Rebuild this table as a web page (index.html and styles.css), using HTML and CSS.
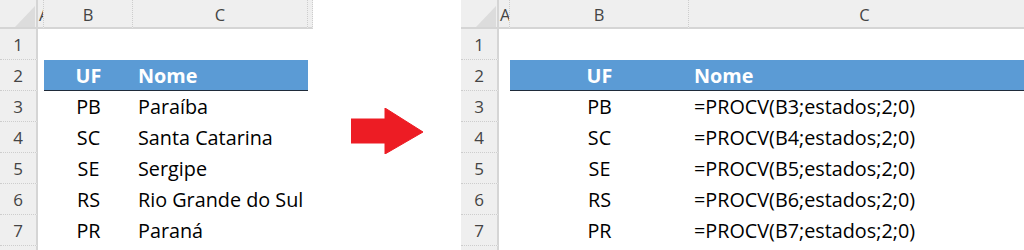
FILE: index.html
```html
<!DOCTYPE html>
<html lang="pt">
<head>
<meta charset="utf-8">
<title>PROCV</title>
<link rel="stylesheet" href="styles.css">
</head>
<body>
<div class="page">
  <div class="sheet left">
    <div class="corner"><svg class="tri" viewBox="0 0 20 21" width="20" height="21"><polygon points="0,21 20,0 20,21" fill="#dcdcdc"/></svg></div>
    <div class="ch cha">A</div>
    <div class="ch">B</div>
    <div class="ch">C</div>
    <div class="ch"></div>

    <div class="rh">1</div><div class="c"></div><div class="c"></div><div class="c"></div><div class="c"></div>
    <div class="rh">2</div><div class="c"></div><div class="c ctr blue">UF</div><div class="c pad blue">Nome</div><div class="c"></div>
    <div class="rh">3</div><div class="c"></div><div class="c ctr">PB</div><div class="c pad">Paraíba</div><div class="c"></div>
    <div class="rh">4</div><div class="c"></div><div class="c ctr">SC</div><div class="c pad">Santa Catarina</div><div class="c"></div>
    <div class="rh">5</div><div class="c"></div><div class="c ctr">SE</div><div class="c pad">Sergipe</div><div class="c"></div>
    <div class="rh">6</div><div class="c"></div><div class="c ctr">RS</div><div class="c pad">Rio Grande do Sul</div><div class="c"></div>
    <div class="rh">7</div><div class="c"></div><div class="c ctr">PR</div><div class="c pad">Paraná</div><div class="c"></div>
    <div class="rh"></div>
  </div>

  <div class="gap">
    <svg class="arrow" viewBox="0 0 72 46" width="72" height="46"><polygon points="0,11 34,11 34,0 72,24 34,46 34,35 0,35" fill="#ed1c24" stroke="#ed1c24" stroke-width="1" stroke-linejoin="round"/></svg>
  </div>

  <div class="sheet right">
    <div class="corner"><svg class="tri" viewBox="0 0 20 21" width="20" height="21"><polygon points="0,21 20,0 20,21" fill="#dcdcdc"/></svg></div>
    <div class="ch cha">A</div>
    <div class="ch">B</div>
    <div class="ch">C</div>

    <div class="rh">1</div><div class="c"></div><div class="c"></div><div class="c"></div>
    <div class="rh">2</div><div class="c"></div><div class="c ctr blue">UF</div><div class="c pad blue">Nome</div>
    <div class="rh">3</div><div class="c"></div><div class="c ctr">PB</div><div class="c pad">=PROCV(B3;estados;2;0)</div>
    <div class="rh">4</div><div class="c"></div><div class="c ctr">SC</div><div class="c pad">=PROCV(B4;estados;2;0)</div>
    <div class="rh">5</div><div class="c"></div><div class="c ctr">SE</div><div class="c pad">=PROCV(B5;estados;2;0)</div>
    <div class="rh">6</div><div class="c"></div><div class="c ctr">RS</div><div class="c pad">=PROCV(B6;estados;2;0)</div>
    <div class="rh">7</div><div class="c"></div><div class="c ctr">PR</div><div class="c pad">=PROCV(B7;estados;2;0)</div>
    <div class="rh"></div>
  </div>
</div>
</body>
</html>
```
FILE: styles.css
```css
* { box-sizing: border-box; }
body {
  margin: 0;
  background: #fff;
  font-family: "Open Sans", "Liberation Sans", sans-serif;
}
.page {
  display: flex;
  width: 1024px;
  height: 250px;
  overflow: hidden;
}
.sheet {
  display: grid;
  grid-template-rows: 29px repeat(8, 31px);
  height: 250px;
  overflow: hidden;
  flex: none;
}
.left {
  width: 313px;
  grid-template-columns: 38px 6px 89px 175px 5px;
}
.right {
  width: 563px;
  grid-template-columns: 38px 11px 179px 352px;
}
.gap {
  width: 148px;
  flex: none;
  display: flex;
  justify-content: center;
  align-items: flex-start;
  padding-top: 108px;
}
.arrow { display: block; }

.corner {
  background: #efefef;
  border-bottom: 2px solid #d5d5d5;
  border-right: 2px solid #d5d5d5;
  display: flex;
  justify-content: flex-end;
  align-items: flex-end;
  padding: 0 1px 0 0;
}
.tri { display: block; }

.ch {
  background: #efefef;
  border-bottom: 2px solid #d5d5d5;
  border-right: 1px dotted #cdcdcd;
  color: #444;
  font-size: 16.5px;
  display: flex;
  align-items: center;
  justify-content: center;
  overflow: hidden;
  white-space: nowrap;
  padding-top: 1px;
}
.cha {
  justify-content: flex-start;
  padding-left: 1px;
}

.rh {
  background: #efefef;
  border-right: 2px solid #d5d5d5;
  border-bottom: 1px dotted #cdcdcd;
  color: #444;
  font-size: 17px;
  display: flex;
  align-items: center;
  justify-content: center;
}

.c {
  font-size: 19.8px;
  color: #000;
  display: flex;
  align-items: center;
  white-space: nowrap;
  overflow: hidden;
}
.ctr { justify-content: center; }
.pad { padding-left: 5px; }
.blue {
  background: #5b9bd5;
  color: #fff;
  font-weight: 700;
  border-bottom: 1px solid #1f2b3a;
}
```
